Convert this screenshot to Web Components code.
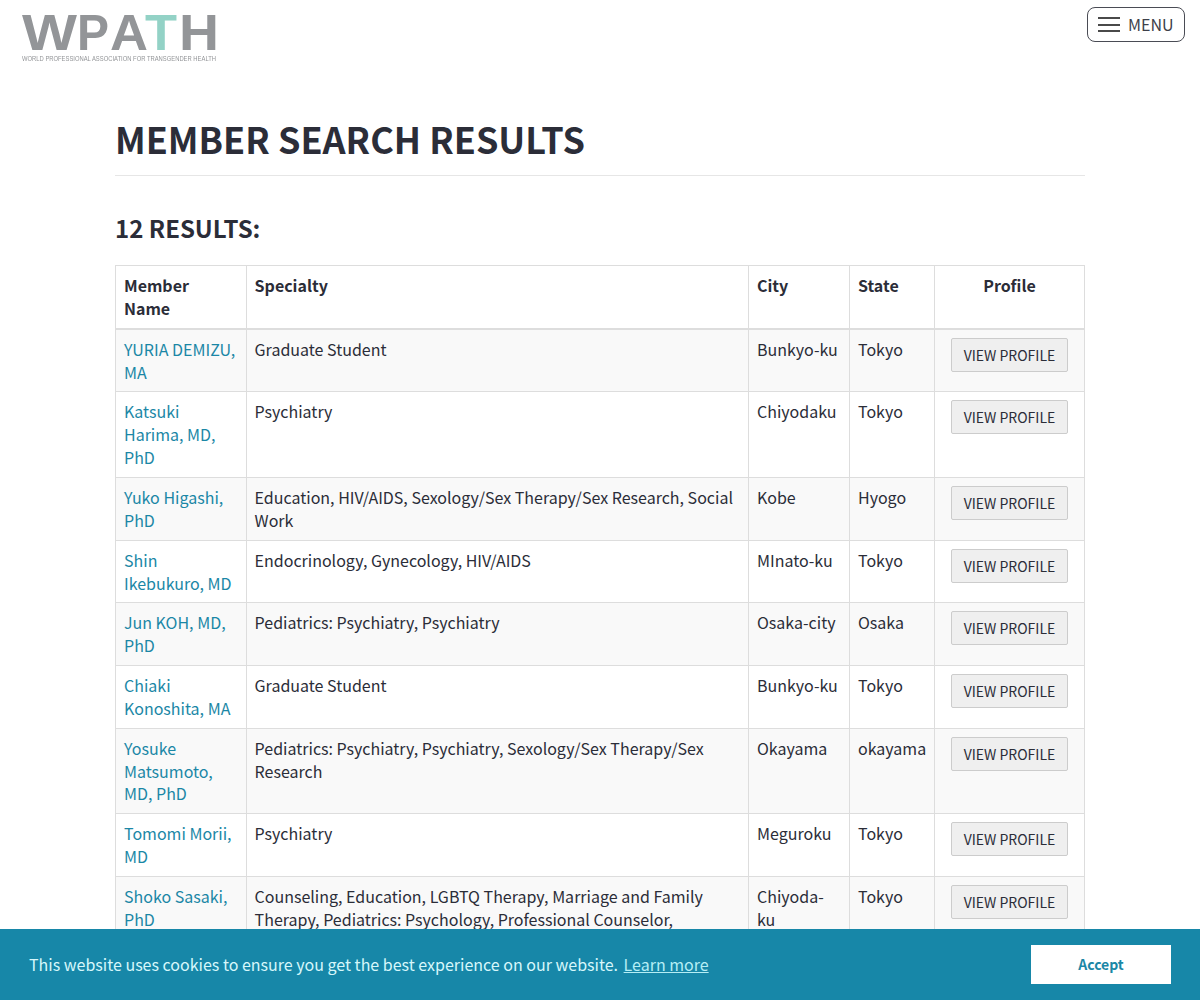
<!DOCTYPE html>
<html lang="en">
<head>
<meta charset="utf-8">
<title>Member Search Results</title>
<style>
    html, body { height: 1000px; overflow: hidden; }
    body {
        margin: 0;
        background: #fff;
        color: #2b2d38;
        font-family: "Noto Sans CJK JP", "Noto Sans", sans-serif;
        font-size: 16px;
    }
</style>
</head>
<body>
<site-header></site-header>
<page-main>
    <span slot="title">MEMBER SEARCH RESULTS</span>
    <span slot="count">12 RESULTS:</span>
    <member-head></member-head>
    <member-row name="YURIA DEMIZU, MA" city="Bunkyo-ku" state="Tokyo" shade>Graduate Student</member-row>
    <member-row name="Katsuki Harima, MD, PhD" city="Chiyodaku" state="Tokyo">Psychiatry</member-row>
    <member-row name="Yuko Higashi, PhD" city="Kobe" state="Hyogo" shade>Education, HIV/AIDS, Sexology/Sex Therapy/Sex Research, Social Work</member-row>
    <member-row name="Shin Ikebukuro, MD" city="MInato-ku" state="Tokyo">Endocrinology, Gynecology, HIV/AIDS</member-row>
    <member-row name="Jun KOH, MD, PhD" city="Osaka-city" state="Osaka" shade>Pediatrics: Psychiatry, Psychiatry</member-row>
    <member-row name="Chiaki Konoshita, MA" city="Bunkyo-ku" state="Tokyo">Graduate Student</member-row>
    <member-row name="Yosuke Matsumoto, MD, PhD" city="Okayama" state="okayama" shade>Pediatrics: Psychiatry, Psychiatry, Sexology/Sex Therapy/Sex Research</member-row>
    <member-row name="Tomomi Morii, MD" city="Meguroku" state="Tokyo">Psychiatry</member-row>
    <member-row name="Shoko Sasaki, PhD" city="Chiyoda-ku" state="Tokyo" shade>Counseling, Education, LGBTQ Therapy, Marriage and Family Therapy, Pediatrics: Psychology, Professional Counselor,</member-row>
</page-main>
<cookie-bar></cookie-bar>

<script>
const COLUMNS = '130.6px 502.4px 101px 85px 149px';

class SiteHeader extends HTMLElement {
    constructor() {
        super();
        this.attachShadow({ mode: 'open' });
        this.shadowRoot.innerHTML = `
            <style>
                :host {
                    display: flex;
                    justify-content: space-between;
                    align-items: flex-start;
                    padding: 7px 15px 0 22px;
                }
                svg { display: block; margin-top: -7px; filter: blur(0.4px); }
                button {
                    display: flex;
                    align-items: center;
                    gap: 8px;
                    box-sizing: border-box;
                    width: 98px;
                    height: 35px;
                    padding: 0 10px 2px;
                    background: #fff;
                    border: 1px solid #4a4c55;
                    border-radius: 8px;
                    color: #3d3f4a;
                    font: inherit;
                    line-height: 1;
                }
                button i {
                    display: block;
                    flex: none;
                    width: 22px;
                    height: 11px;
                    margin-top: 2px;
                    border-top: 2px solid #4a4a4a;
                    border-bottom: 2px solid #4a4a4a;
                    position: relative;
                }
                button i::after {
                    content: '';
                    position: absolute;
                    left: 0;
                    right: 0;
                    top: 4.5px;
                    height: 2px;
                    background: #4a4a4a;
                }
            </style>
            <svg width="196" height="64" viewBox="0 0 196 64" aria-label="WPATH" font-family="Liberation Sans">
                <g font-weight="700" font-size="49.5" fill="#939598">
                    <text x="0" y="50" textLength="55" lengthAdjust="spacingAndGlyphs">W</text>
                    <text x="55" y="50" textLength="32" lengthAdjust="spacingAndGlyphs">P</text>
                    <text x="88" y="50" textLength="38" lengthAdjust="spacingAndGlyphs">A</text>
                    <text x="123" y="50" textLength="32" lengthAdjust="spacingAndGlyphs" fill="#93d2c6">T</text>
                    <text x="157" y="50" textLength="40" lengthAdjust="spacingAndGlyphs">H</text>
                </g>
                <text x="0" y="61" font-size="7" fill="#939598" textLength="194" lengthAdjust="spacingAndGlyphs">WORLD PROFESSIONAL ASSOCIATION FOR TRANSGENDER HEALTH</text>
            </svg>
            <button type="button"><i></i>MENU</button>
        `;
    }
}

class PageMain extends HTMLElement {
    constructor() {
        super();
        this.attachShadow({ mode: 'open' });
        this.shadowRoot.innerHTML = `
            <style>
                :host {
                    display: block;
                    width: 970px;
                    margin: 0 auto;
                }
                h1 {
                    margin: 0;
                    padding: 49px 0 12px;
                    border-bottom: 1px solid #e6e6e6;
                    font-size: 36px;
                    line-height: 50px;
                    font-weight: 700;
                }
                h2 {
                    margin: 0;
                    padding: 35px 0 20px;
                    font-size: 24px;
                    line-height: 34px;
                    font-weight: 700;
                }
                .table {
                    border-top: 1px solid #ddd;
                    border-left: 1px solid #ddd;
                    border-right: 1px solid #ddd;
                }
            </style>
            <h1><slot name="title"></slot></h1>
            <h2><slot name="count"></slot></h2>
            <div class="table"><slot></slot></div>
        `;
    }
}

class MemberHead extends HTMLElement {
    constructor() {
        super();
        this.attachShadow({ mode: 'open' });
        this.shadowRoot.innerHTML = `
            <style>
                :host {
                    display: grid;
                    grid-template-columns: ${COLUMNS};
                    border-bottom: 2px solid #ddd;
                    font-weight: 700;
                    line-height: 23px;
                }
                div {
                    box-sizing: border-box;
                    padding: 8px 8px 7.8px;
                    border-right: 1px solid #ddd;
                }
                div:last-child { text-align: center; border-right: 0; }
            </style>
            <div>Member Name</div>
            <div>Specialty</div>
            <div>City</div>
            <div>State</div>
            <div>Profile</div>
        `;
    }
}

class MemberRow extends HTMLElement {
    constructor() {
        super();
        this.attachShadow({ mode: 'open' });
        this.shadowRoot.innerHTML = `
            <style>
                :host {
                    display: grid;
                    grid-template-columns: ${COLUMNS};
                    border-bottom: 1px solid #ddd;
                    line-height: 22.85px;
                }
                :host([shade]) { background: #f9f9f9; }
                .cell {
                    box-sizing: border-box;
                    padding: 8px;
                    border-right: 1px solid #ddd;
                }
                .cell:last-child { border-right: 0; text-align: center; }
                a { color: #1b87a6; text-decoration: none; }
                button {
                    box-sizing: border-box;
                    width: 117px;
                    height: 34px;
                    padding: 0;
                    background: #efefef;
                    border: 1px solid #ccc;
                    border-radius: 2px;
                    color: #2b2d38;
                    font: inherit;
                    font-size: 14px;
                    line-height: 1;
                }
            </style>
            <div class="cell"><a href="#"></a></div>
            <div class="cell"><slot></slot></div>
            <div class="cell city"></div>
            <div class="cell state"></div>
            <div class="cell"><button type="button">VIEW PROFILE</button></div>
        `;
    }

    connectedCallback() {
        this.shadowRoot.querySelector('a').textContent = this.getAttribute('name');
        this.shadowRoot.querySelector('.city').textContent = this.getAttribute('city');
        this.shadowRoot.querySelector('.state').textContent = this.getAttribute('state');
    }
}

class CookieBar extends HTMLElement {
    constructor() {
        super();
        this.attachShadow({ mode: 'open' });
        this.shadowRoot.innerHTML = `
            <style>
                :host {
                    position: fixed;
                    left: 0;
                    right: 0;
                    bottom: 0;
                    box-sizing: border-box;
                    height: 71px;
                    display: flex;
                    align-items: center;
                    justify-content: space-between;
                    padding: 0 29px;
                    background: #1787a8;
                    color: #d6f7fb;
                    line-height: 24px;
                }
                span { margin-top: -2px; }
                a { color: #b5eef5; margin-left: 2px; text-decoration: underline; }
                button {
                    width: 140px;
                    height: 39px;
                    padding: 0 0 2px;
                    border: 0;
                    background: #fff;
                    color: #1b87a6;
                    font: inherit;
                    font-size: 14px;
                    font-weight: 700;
                }
            </style>
            <span>This website uses cookies to ensure you get the best experience on our website. <a href="#">Learn more</a></span>
            <button type="button">Accept</button>
        `;
    }
}

customElements.define('site-header', SiteHeader);
customElements.define('page-main', PageMain);
customElements.define('member-head', MemberHead);
customElements.define('member-row', MemberRow);
customElements.define('cookie-bar', CookieBar);
</script>
</body>
</html>
